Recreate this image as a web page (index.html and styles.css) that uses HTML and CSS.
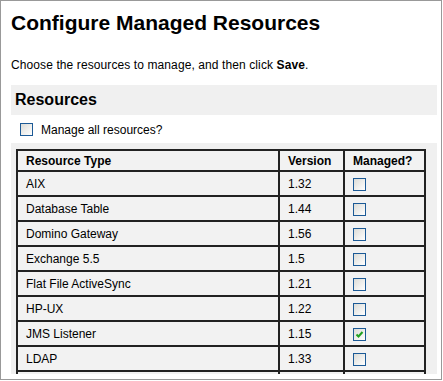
FILE: index.html
```html
<!DOCTYPE html>
<html lang="en">
<head>
    <meta charset="UTF-8">
    <meta name="viewport" content="width=device-width, initial-scale=1.0">
    <title>Configure Managed Resources</title>
    <link rel="stylesheet" href="styles.css">
</head>
<body>
    <div class="frame">
        <div class="page">
            <h1>Configure Managed Resources</h1>
            <p class="intro">Choose the resources to manage, and then click <b>Save</b>.</p>

            <div class="section-title">Resources</div>

            <div class="manage-all">
                <span class="cb"></span>
                <span>Manage all resources?</span>
            </div>

            <div class="panel">
                <table class="resources">
                    <thead>
                        <tr>
                            <th class="col-type">Resource Type</th>
                            <th class="col-version">Version</th>
                            <th class="col-managed">Managed?</th>
                        </tr>
                    </thead>
                    <tbody>
                        <tr><td>AIX</td><td>1.32</td><td><span class="cb"></span></td></tr>
                        <tr><td>Database Table</td><td>1.44</td><td><span class="cb"></span></td></tr>
                        <tr><td>Domino Gateway</td><td>1.56</td><td><span class="cb"></span></td></tr>
                        <tr><td>Exchange 5.5</td><td>1.5</td><td><span class="cb"></span></td></tr>
                        <tr><td>Flat File ActiveSync</td><td>1.21</td><td><span class="cb"></span></td></tr>
                        <tr><td>HP-UX</td><td>1.22</td><td><span class="cb"></span></td></tr>
                        <tr>
                            <td>JMS Listener</td><td>1.15</td>
                            <td><span class="cb"><svg width="11" height="11" viewBox="0 0 11 11"><path d="M2.5 5.5 L4.5 7.5 L8.5 3" fill="none" stroke="#21a121" stroke-width="2"/></svg></span></td>
                        </tr>
                        <tr><td>LDAP</td><td>1.33</td><td><span class="cb"></span></td></tr>
                        <tr><td></td><td></td><td></td></tr>
                    </tbody>
                </table>
            </div>
        </div>
    </div>
</body>
</html>
```

FILE: styles.css
```css
body {
    margin: 0;
    font-family: "Liberation Sans", Arial, sans-serif;
    color: #000;
    background-color: white;
}
.frame {
    width: 442px;
    height: 380px;
    box-sizing: border-box;
    border: 1px solid #999;
    padding-bottom: 5px;
    background-color: white;
}
.page {
    height: 373px;
    overflow: hidden;
    padding: 0 4px 0 10px;
}
h1 {
    margin: 10px 0 0 0;
    font-size: 21px;
    line-height: 24px;
    font-weight: bold;
}
.intro {
    margin: 23px 0 0 0;
    font-size: 12px;
    line-height: 14px;
    letter-spacing: 0.1px;
}
.section-title {
    margin-top: 13px;
    height: 30px;
    line-height: 30px;
    padding-left: 4px;
    font-size: 16px;
    font-weight: bold;
    background-color: #f0f0f0;
}
.manage-all {
    display: flex;
    align-items: center;
    gap: 8px;
    height: 13px;
    margin: 8px 0 0 9px;
    font-size: 12px;
}
.cb {
    display: inline-block;
    width: 13px;
    height: 13px;
    box-sizing: border-box;
    border: 1px solid #1c5a96;
    background: linear-gradient(135deg, #dcdcd7, #ffffff);
    vertical-align: middle;
}
.cb svg {
    display: block;
}
.panel {
    margin-top: 7px;
    padding: 6px 11px 0 5px;
    background-color: #f0f0f0;
}
.resources {
    width: 410px;
    table-layout: fixed;
    border-collapse: separate;
    border-spacing: 0;
    border: 1px solid #222;
    font-size: 12px;
}
.resources th,
.resources td {
    border: 1px solid #222;
    padding: 0 8px;
    text-align: left;
    vertical-align: middle;
    background-color: #f2f2f2;
}
.resources th {
    height: 19px;
    font-weight: bold;
}
.resources td {
    height: 23px;
}
.col-type {
    width: 244px;
}
.col-version {
    width: 47px;
}
.col-managed {
    width: 63px;
}
```
